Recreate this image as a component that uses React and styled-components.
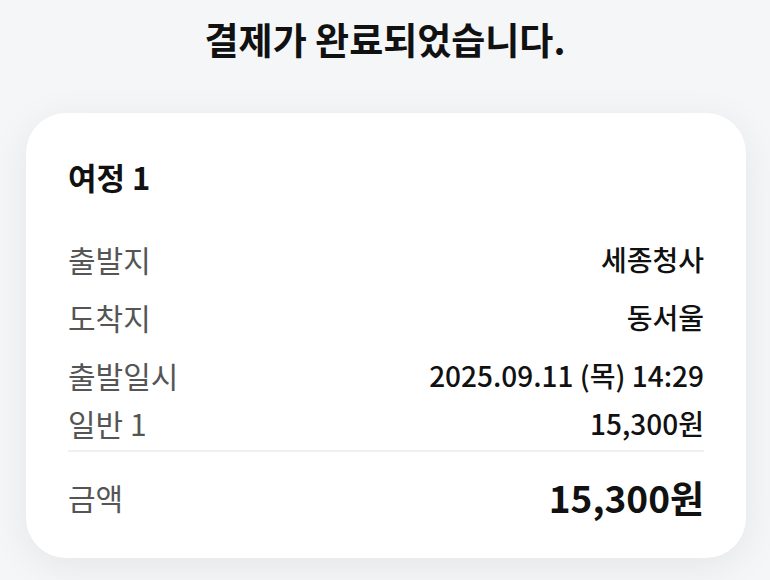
import React from "react";
import styled, { createGlobalStyle } from "styled-components";

const Global = createGlobalStyle`
  html, body { margin: 0; padding: 0; background: #f5f6f8; }
  body { font-family: "Noto Sans CJK KR", "Noto Sans", sans-serif; color: #111; }
`;

const Page = styled.main`
  width: 770px;
  height: 580px;
  box-sizing: border-box;
  padding-top: 13px;
  display: flex;
  flex-direction: column;
  align-items: center;
`;

const Title = styled.h1`
  margin: 0;
  font-size: 37px;
  font-weight: 700;
  line-height: 53px;
  color: #111;
`;

const Card = styled.section`
  margin: 47px 0 0 2px;
  width: 720px;
  box-sizing: border-box;
  background: #fff;
  border-radius: 40px;
  box-shadow: 0 8px 40px rgba(0, 0, 0, 0.07);
  padding: 42px 42px 31px 42px;
`;

const TripTitle = styled.h2`
  margin: 0 0 31px;
  font-size: 31px;
  font-weight: 700;
  line-height: 44px;
  color: #111;
`;

const Row = styled.div`
  display: flex;
  justify-content: space-between;
  align-items: center;
  height: ${(p) => p.$h || 58}px;
`;

const Label = styled.span`
  font-size: 30px;
  color: #555;
  font-weight: 400;
`;

const Value = styled.span`
  font-size: ${(p) => (p.$big ? 37 : 28)}px;
  font-weight: ${(p) => (p.$big ? 700 : 500)};
  color: #111;
`;

const Divider = styled.hr`
  margin: 8px 0 15px;
  border: 0;
  border-top: 2px solid #f0f0f0;
`;

export default function App() {
  return (
    <>
      <Global />
      <Page>
        <Title>결제가 완료되었습니다.</Title>
        <Card>
          <TripTitle>여정 1</TripTitle>
          <Row>
            <Label>출발지</Label>
            <Value>세종청사</Value>
          </Row>
          <Row>
            <Label>도착지</Label>
            <Value>동서울</Value>
          </Row>
          <Row>
            <Label>출발일시</Label>
            <Value>2025.09.11 (목) 14:29</Value>
          </Row>
          <Row $h={38}>
            <Label>일반 1</Label>
            <Value>15,300원</Value>
          </Row>
          <Divider />
          <Row $h={60}>
            <Label>금액</Label>
            <Value $big>15,300원</Value>
          </Row>
        </Card>
      </Page>
    </>
  );
}
